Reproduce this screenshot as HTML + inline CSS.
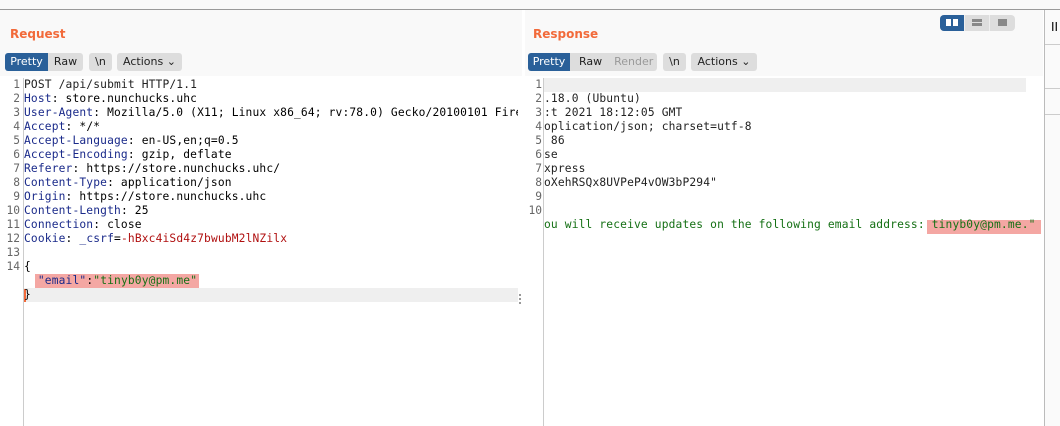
<!DOCTYPE html>
<html><head><style>
body{margin:0;width:1060px;height:426px;background:#fff;position:relative;overflow:hidden;font-family:"DejaVu Sans","Liberation Sans",sans-serif}
.abs{position:absolute}
.mono{font-family:"DejaVu Sans Mono","Liberation Mono",monospace;font-size:11.25px;letter-spacing:0.15px;line-height:14px;white-space:pre}
.title{color:#f26a3a;font-weight:bold;font-size:12px}
.btn{position:absolute;top:53px;height:18px;line-height:18px;font-size:11px;color:#222;background:#ddd;border-radius:3px;text-align:center}
.k{color:#1a2a8a}.v{color:#222}.r{color:#b01010}.g{color:#157015}
.num{color:#666;text-align:right;letter-spacing:0}
</style></head><body>
<div class="abs" style="left:0;top:0;width:1060px;height:9px;background:#f9f9f9;border-bottom:1px solid #999"></div>
<div class="abs" style="left:0;top:10px;width:522px;height:66px;background:#f9f9f9"></div>
<div class="abs" style="left:525px;top:10px;width:518px;height:66px;background:#f9f9f9"></div>
<div class="abs" style="left:522px;top:10px;width:3px;height:416px;background:#fff"></div>
<div class="abs" style="left:1044px;top:10px;width:1px;height:416px;background:#bbb"></div>
<div class="abs" style="left:1045px;top:10px;width:15px;height:416px;background:#fafafa"></div>
<div class="abs" style="left:1051px;top:20px;font-size:12px;color:#000">II</div>
<div class="abs" style="left:1045px;top:44px;width:15px;height:1px;background:#ccc"></div>
<div class="abs" style="left:1045px;top:88px;width:15px;height:1px;background:#ccc"></div>
<div class="abs" style="left:1045px;top:114px;width:15px;height:1px;background:#ccc"></div>

<div class="abs title" style="left:10px;top:27px">Request</div>
<div class="abs title" style="left:533px;top:27px">Response</div>

<div class="btn" style="left:5px;width:43px;background:#2a6099;color:#fff;border-radius:3px 0 0 3px">Pretty</div>
<div class="btn" style="left:48px;width:35px;border-radius:0 3px 3px 0">Raw</div>
<div class="btn" style="left:89px;width:23px">\n</div>
<div class="btn" style="left:117px;width:65px">Actions ⌄</div>

<div class="btn" style="left:528px;width:42px;background:#2a6099;color:#fff;border-radius:3px 0 0 3px">Pretty</div>
<div class="btn" style="left:570px;width:87px;border-radius:0 3px 3px 0;text-align:left"><span style="margin-left:9px">Raw</span><span style="margin-left:12px;color:#999">Render</span></div>
<div class="btn" style="left:663px;width:23px">\n</div>
<div class="btn" style="left:691px;width:66px">Actions ⌄</div>

<div class="abs" style="left:940px;top:15px;width:75px;height:16px;background:#ddd;border-radius:4px"></div>
<div class="abs" style="left:940px;top:15px;width:24px;height:16px;background:#2a6099;border-radius:4px 0 0 4px"></div>
<div class="abs" style="left:946px;top:19px;width:5px;height:7px;background:#fff"></div>
<div class="abs" style="left:953px;top:19px;width:5px;height:7px;background:#fff"></div>
<div class="abs" style="left:964px;top:15px;width:1px;height:16px;background:#eee"></div>
<div class="abs" style="left:989px;top:15px;width:1px;height:16px;background:#eee"></div>
<div class="abs" style="left:972px;top:19px;width:10px;height:3px;background:#888"></div>
<div class="abs" style="left:972px;top:23px;width:10px;height:3px;background:#888"></div>
<div class="abs" style="left:998px;top:19px;width:9px;height:7px;background:#888"></div>

<!-- left editor -->
<div class="abs" style="left:23px;top:78px;width:1px;height:348px;background:#ccc"></div>
<div class="abs" style="left:24px;top:288px;width:494px;height:14px;background:#efefef"></div>
<div class="abs" style="left:35px;top:274px;width:164px;height:14px;background:#f4a7a3"></div>
<div class="abs" style="left:24px;top:289px;width:2px;height:13px;background:#f26a3a"></div>
<div class="abs mono num" style="left:0;top:78px;width:20px">1
2
3
4
5
6
7
8
9
10
11
12
13
14</div>
<div class="abs mono" style="left:24px;top:78px;width:494px;overflow:hidden"><span class="v">POST /api/submit HTTP/1.1</span>
<span class="k">Host</span>: store.nunchucks.uhc
<span class="k">User-Agent</span>: Mozilla/5.0 (X11; Linux x86_64; rv:78.0) Gecko/20100101 Firefox/78.0
<span class="k">Accept</span>: */*
<span class="k">Accept-Language</span>: en-US,en;q=0.5
<span class="k">Accept-Encoding</span>: gzip, deflate
<span class="k">Referer</span>: https://store.nunchucks.uhc/
<span class="k">Content-Type</span>: application/json
<span class="k">Origin</span>: https://store.nunchucks.uhc
<span class="k">Content-Length</span>: 25
<span class="k">Connection</span>: close
<span class="k">Cookie</span>: <span class="k">_csrf</span>=<span class="r">-hBxc4iSd4z7bwubM2lNZilx</span>

{
  <span class="k">"email"</span>:<span class="g">"tinyb0y@pm.me"</span>
}</div>
<div class="abs" style="left:519px;top:294px;width:2px;height:2px;background:#999;box-shadow:0 4px #999,0 8px #999"></div>

<!-- right editor -->
<div class="abs" style="left:543px;top:78px;width:1px;height:348px;background:#ccc"></div>
<div class="abs" style="left:544px;top:78px;width:482px;height:14px;background:#efefef"></div>
<div class="abs" style="left:927px;top:220px;width:114px;height:14px;background:#f4a7a3"></div>
<div class="abs mono num" style="left:525px;top:78px;width:17px">1
2
3
4
5
6
7
8
9
10</div>
<div class="abs mono v" style="left:544px;top:78px">
.18.0 (Ubuntu)
:t 2021 18:12:05 GMT
oplication/json; charset=utf-8
 86
se
xpress
oXehRSQx8UVPeP4vOW3bP294"


<span class="g">ou will receive updates on the following email address: tinyb0y@pm.me."</span></div>
</body></html>
